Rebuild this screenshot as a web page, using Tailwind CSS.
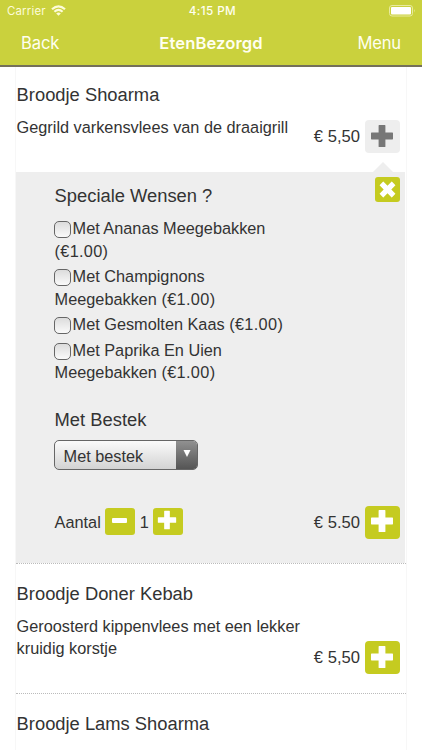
<!DOCTYPE html>
<html lang="nl">
<head>
<meta charset="utf-8">
<meta name="viewport" content="width=device-width, initial-scale=1">
<title>EtenBezorgd</title>
<script src="https://cdn.jsdelivr.net/npm/@tailwindcss/browser@4"></script>
</head>
<body class="h-[750px] overflow-hidden bg-white font-['Liberation_Sans',Arial,sans-serif] text-[#333]">
<svg class="hidden">
  <symbol id="plus" viewBox="0 0 24 24"><path d="M9.2 1h5.6q.6 0 .6.6v7h7q.6 0 .6.6v5.6q0 .6-.6.6h-7v7q0 .6-.6.6H9.200q-.6 0-.6-.6v-7h-7q-.6 0-.6-.6V9.200q0-.6.6-.6h7v-7q0-.6.6-.6z" fill="currentColor"/></symbol>
</svg>
<header class="h-[67px] border-b-2 border-[#74705a] bg-[#cad13d] font-['Inter',sans-serif] text-[#fffff0]">
  <div class="grid h-[22px] grid-cols-3 items-center pl-[7px] pr-[6px]">
    <div class="flex items-center gap-[5px] text-[11.4px] tracking-[0.2px] text-[#fdfcd9]">
      <span class="pt-px">Carrier</span>
      <svg class="h-[11px] w-[15px]" viewBox="0 0 15 11" fill="none" stroke="currentColor" stroke-width="2.200"><path d="M1 4.300Q7.500-1.700 14 4.300M3.400 6.800Q7.500 3.100 11.600 6.800"/><path d="M5.200 8.500Q7.500 6.500 9.800 8.500L7.500 10.800z" fill="currentColor" stroke="none"/></svg>
    </div>
    <span class="pt-px pl-[2px] text-center text-[11.7px] font-medium tracking-[0.4px] whitespace-nowrap">4:15 PM</span>
    <svg class="h-[12px] w-[27px] justify-self-end" viewBox="0 0 27 12"><rect x=".5" y=".5" width="23" height="10.500" rx="2.500" fill="none" stroke="#e9eb9f"/><rect x="2" y="2" width="20" height="7.500" rx="1" fill="#fff"/><path d="M25 4q1.500 1.800 0 3.600z" fill="#e9eb9f"/></svg>
  </div>
  <nav class="grid h-[42px] grid-cols-3 items-center pl-[21px] pr-[21px] text-[16.6px]">
    <span class="tracking-[-0.1px]">Back</span>
    <span class="text-center font-semibold tracking-[0.1px]">EtenBezorgd</span>
    <span class="text-right tracking-[-0.2px]">Menu</span>
  </nav>
</header>
<main class="ml-[15px] w-[392px] border-x border-[#f7f7f7]">
  <article class="h-[105px] pt-[17px]">
    <h2 class="pl-[0.6px] text-[18.35px] leading-[22px]">Broodje Shoarma</h2>
    <div class="flex justify-between pr-[6px]">
      <p class="pt-[10px] pl-[0.6px] text-[16.3px] leading-[22.4px] whitespace-nowrap">Gegrild varkensvlees van de draaigrill</p>
      <div class="mt-[14px] flex h-[33px] items-center gap-[5px]">
        <span class="pt-[2px] text-[16.6px] whitespace-nowrap">€ 5,50</span>
        <button class="flex h-[33px] w-[35px] items-center justify-center rounded-[4px] bg-[#eee] pr-[2px] pb-[2px] text-[#777]"><svg class="size-[24px]"><use href="#plus"/></svg></button>
      </div>
    </div>
  </article>
  <section class="relative h-[391px] w-[389px] bg-[#eee] pt-[12px] pl-[38.600px]">
    <svg class="absolute -top-[10px] left-[356px] h-[10px] w-[22px]" viewBox="0 0 22 10"><path d="M1 10L11 0l10 10z" fill="#eee"/></svg>
    <button class="absolute top-[5px] left-[359px] flex h-[25px] w-[25px] items-center justify-center rounded-[3px] bg-[#c5cb20] text-white"><svg class="size-[19px] rotate-45"><use href="#plus"/></svg></button>
    <h3 class="text-[18.35px] leading-[23px]">Speciale Wensen ?</h3>
    <ul class="mt-[10.300px] flex w-[250px] flex-col gap-[3.2px] text-[16.3px] leading-[22.4px] whitespace-nowrap">
      <li><i class="mr-[1.600px] -ml-[0.6px] inline-block size-[17px] rounded-[5px] border border-[#666] bg-linear-to-b from-[#dcdcdc] to-[#fafafa] align-[-4px]"></i>Met Ananas Meegebakken<br><span class="tracking-[0.3px]">(€1.00)</span></li>
      <li><i class="mr-[1.600px] -ml-[0.6px] inline-block size-[17px] rounded-[5px] border border-[#666] bg-linear-to-b from-[#dcdcdc] to-[#fafafa] align-[-4px]"></i>Met Champignons<br>Meegebakken <span class="tracking-[0.35px]">(€1.00)</span></li>
      <li><i class="mr-[1.600px] -ml-[0.6px] inline-block size-[17px] rounded-[5px] border border-[#666] bg-linear-to-b from-[#dcdcdc] to-[#fafafa] align-[-4px]"></i>Met Gesmolten Kaas <span class="tracking-[0.35px]">(€1.00)</span></li>
      <li><i class="mr-[1.600px] -ml-[0.6px] inline-block size-[17px] rounded-[5px] border border-[#666] bg-linear-to-b from-[#dcdcdc] to-[#fafafa] align-[-4px]"></i>Met Paprika En Uien<br>Meegebakken <span class="tracking-[0.35px]">(€1.00)</span></li>
    </ul>
    <h3 class="mt-[25.200px] text-[18.35px] leading-[22px]">Met Bestek</h3>
    <div class="-ml-[0.6px] mt-[9px] flex h-[30px] w-[144px] overflow-hidden rounded-[5px] border border-[#666] bg-linear-to-b from-[#fbfbfb] to-[#d3d3d3]">
      <span class="flex-1 pl-[8.600px] text-[16.3px] leading-[30px]">Met bestek</span>
      <span class="flex w-[21px] items-center justify-center bg-linear-to-b from-[#919191] to-[#555]"><svg class="mb-[2px] h-[7px] w-[8px]" viewBox="0 0 8 7"><path d="M.5 0h7L4 7z" fill="#fff"/></svg></span>
    </div>
    <div class="mt-[36px] flex h-[33px] items-center pr-[5px]">
      <span class="-mt-[1px] text-[16.3px]">Aantal</span>
      <button class="-mt-[2px] ml-[4px] flex h-[27px] w-[30px] items-center justify-center rounded-[3px] bg-[#c5cb20]"><i class="mr-[1px] mb-[2px] h-[5px] w-[15px] rounded-[1px] bg-white"></i></button>
      <span class="-mt-[1px] ml-[5px] w-[13.500px] text-[16.3px]">1</span>
      <button class="-mt-[2px] flex h-[27px] w-[30px] items-center justify-center rounded-[3px] bg-[#c5cb20] pr-[2px] pb-[2px] text-white"><svg class="size-[20px]"><use href="#plus"/></svg></button>
      <span class="mr-[5px] ml-auto pt-[2px] text-[16.6px]">€ 5.50</span>
      <button class="flex h-[33px] w-[35px] items-center justify-center rounded-[4px] bg-[#c5cb20] pr-[2px] pb-[2px] text-white"><svg class="size-[24px]"><use href="#plus"/></svg></button>
    </div>
  </section>
  <article class="h-[130px] border-t border-dotted border-[#bbb] pt-[19px]">
    <h2 class="pl-[0.6px] text-[18.35px] leading-[22px]">Broodje Doner Kebab</h2>
    <div class="flex justify-between pr-[6px]">
      <p class="pt-[10px] pl-[0.6px] text-[16.3px] leading-[22.4px] whitespace-nowrap">Geroosterd kippenvlees met een lekker<br>kruidig korstje</p>
      <div class="mt-[36px] flex h-[33px] items-center gap-[5px]">
        <span class="pt-[2px] text-[16.6px] whitespace-nowrap">€ 5,50</span>
        <button class="flex h-[33px] w-[35px] items-center justify-center rounded-[4px] bg-[#c5cb20] pr-[2px] pb-[2px] text-white"><svg class="size-[24px]"><use href="#plus"/></svg></button>
      </div>
    </div>
  </article>
  <article class="h-[70px] border-t border-dotted border-[#bbb] pt-[19px]">
    <h2 class="pl-[0.6px] text-[18.35px] leading-[22px]">Broodje Lams Shoarma</h2>
  </article>
</main>
</body>
</html>
